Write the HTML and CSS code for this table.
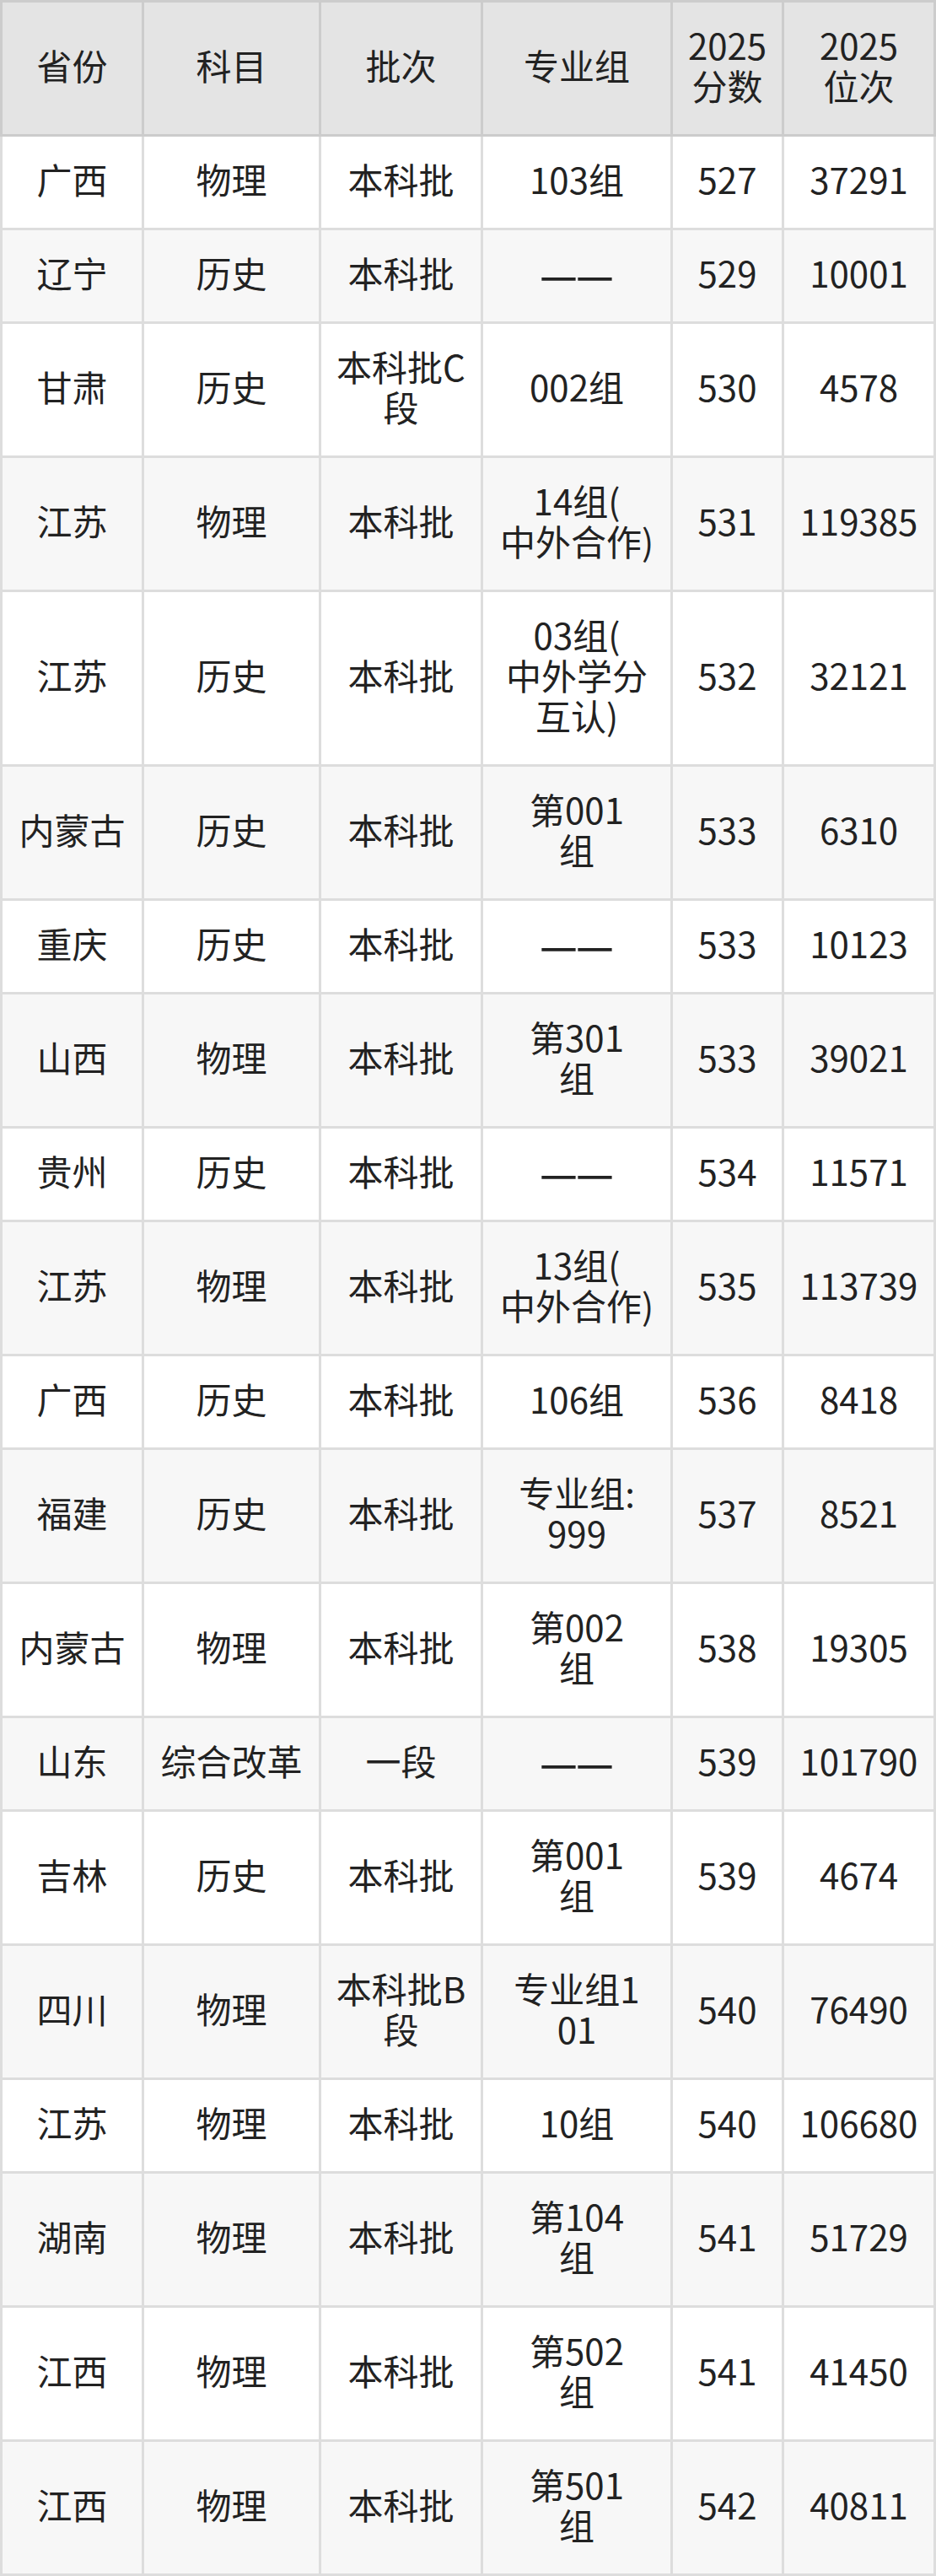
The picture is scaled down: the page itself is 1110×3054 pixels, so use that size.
FILE: index.html
```html
<!DOCTYPE html>
<html lang="zh-CN">
<head>
<meta charset="utf-8">
<title>分数线</title>
<link rel="stylesheet" href="styles.css">
</head>
<body>
<div class="score-table">
  <div class="cell head first">省份</div>
  <div class="cell head">科目</div>
  <div class="cell head">批次</div>
  <div class="cell head">专业组</div>
  <div class="cell head">2025<br>分数</div>
  <div class="cell head">2025<br>位次</div>

  <div class="cell first">广西</div><div class="cell">物理</div><div class="cell">本科批</div><div class="cell">103组</div><div class="cell">527</div><div class="cell">37291</div>

  <div class="cell first alt">辽宁</div><div class="cell alt">历史</div><div class="cell alt">本科批</div><div class="cell alt"><span class="dash">—</span><span class="dash">—</span></div><div class="cell alt">529</div><div class="cell alt">10001</div>

  <div class="cell first">甘肃</div><div class="cell">历史</div><div class="cell">本科批C<br>段</div><div class="cell">002组</div><div class="cell">530</div><div class="cell">4578</div>

  <div class="cell first alt">江苏</div><div class="cell alt">物理</div><div class="cell alt">本科批</div><div class="cell alt">14组(<br>中外合作)</div><div class="cell alt">531</div><div class="cell alt">119385</div>

  <div class="cell first">江苏</div><div class="cell">历史</div><div class="cell">本科批</div><div class="cell">03组(<br>中外学分<br>互认)</div><div class="cell">532</div><div class="cell">32121</div>

  <div class="cell first alt">内蒙古</div><div class="cell alt">历史</div><div class="cell alt">本科批</div><div class="cell alt">第001<br>组</div><div class="cell alt">533</div><div class="cell alt">6310</div>

  <div class="cell first">重庆</div><div class="cell">历史</div><div class="cell">本科批</div><div class="cell"><span class="dash">—</span><span class="dash">—</span></div><div class="cell">533</div><div class="cell">10123</div>

  <div class="cell first alt">山西</div><div class="cell alt">物理</div><div class="cell alt">本科批</div><div class="cell alt">第301<br>组</div><div class="cell alt">533</div><div class="cell alt">39021</div>

  <div class="cell first">贵州</div><div class="cell">历史</div><div class="cell">本科批</div><div class="cell"><span class="dash">—</span><span class="dash">—</span></div><div class="cell">534</div><div class="cell">11571</div>

  <div class="cell first alt">江苏</div><div class="cell alt">物理</div><div class="cell alt">本科批</div><div class="cell alt">13组(<br>中外合作)</div><div class="cell alt">535</div><div class="cell alt">113739</div>

  <div class="cell first">广西</div><div class="cell">历史</div><div class="cell">本科批</div><div class="cell">106组</div><div class="cell">536</div><div class="cell">8418</div>

  <div class="cell first alt">福建</div><div class="cell alt">历史</div><div class="cell alt">本科批</div><div class="cell alt">专业组:<br>999</div><div class="cell alt">537</div><div class="cell alt">8521</div>

  <div class="cell first">内蒙古</div><div class="cell">物理</div><div class="cell">本科批</div><div class="cell">第002<br>组</div><div class="cell">538</div><div class="cell">19305</div>

  <div class="cell first alt">山东</div><div class="cell alt">综合改革</div><div class="cell alt">一段</div><div class="cell alt"><span class="dash">—</span><span class="dash">—</span></div><div class="cell alt">539</div><div class="cell alt">101790</div>

  <div class="cell first">吉林</div><div class="cell">历史</div><div class="cell">本科批</div><div class="cell">第001<br>组</div><div class="cell">539</div><div class="cell">4674</div>

  <div class="cell first alt">四川</div><div class="cell alt">物理</div><div class="cell alt">本科批B<br>段</div><div class="cell alt">专业组1<br>01</div><div class="cell alt">540</div><div class="cell alt">76490</div>

  <div class="cell first">江苏</div><div class="cell">物理</div><div class="cell">本科批</div><div class="cell">10组</div><div class="cell">540</div><div class="cell">106680</div>

  <div class="cell first alt">湖南</div><div class="cell alt">物理</div><div class="cell alt">本科批</div><div class="cell alt">第104<br>组</div><div class="cell alt">541</div><div class="cell alt">51729</div>

  <div class="cell first">江西</div><div class="cell">物理</div><div class="cell">本科批</div><div class="cell">第502<br>组</div><div class="cell">541</div><div class="cell">41450</div>

  <div class="cell first alt">江西</div><div class="cell alt">物理</div><div class="cell alt">本科批</div><div class="cell alt">第501<br>组</div><div class="cell alt">542</div><div class="cell alt">40811</div>
</div>
</body>
</html>
```

FILE: styles.css
```css
html, body {
  margin: 0;
  padding: 0;
  background: #ffffff;
}

.score-table {
  display: grid;
  grid-template-columns: 171px 210px 192px 225px 132px 180px;
  width: 1110px;
  font-family: "Noto Sans CJK SC", "Noto Sans", sans-serif;
  font-size: 42px;
  line-height: 48px;
  color: #222222;
}

.cell {
  box-sizing: border-box;
  display: flex;
  align-items: center;
  justify-content: center;
  text-align: center;
  padding: 26px 4px 34px;
  background: #ffffff;
  border-right: 3px solid #dddddd;
  border-bottom: 3px solid #dddddd;
  white-space: nowrap;
}

.cell.first {
  border-left: 3px solid #dddddd;
}

.cell.alt {
  background: #f7f7f7;
}

.cell.head {
  background: #e4e4e4;
  border-top: 3px solid #cccccc;
  border-right-color: #cccccc;
  border-bottom-color: #cccccc;
  font-weight: normal;
}

.cell.head.first {
  border-left-color: #cccccc;
}

.dash {
  display: inline-block;
  font-size: 50px;
  line-height: 48px;
  font-weight: 500;
  font-variant-ligatures: none;
  font-feature-settings: "liga" 0, "calt" 0;
  margin: 0 -1px;
}
```
